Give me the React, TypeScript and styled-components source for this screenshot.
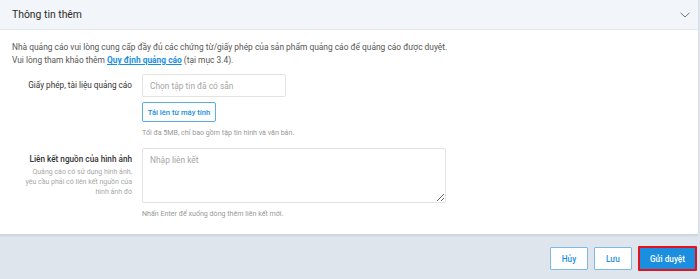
import styled, { createGlobalStyle } from "styled-components";

const GlobalStyle = createGlobalStyle`
  html, body {
    margin: 0;
    padding: 0;
    background: #dfe5ed;
    font-family: Roboto, "Liberation Sans", sans-serif;
  }
  * {
    box-sizing: border-box;
  }
`;

const Page = styled.div`
  width: 700px;
  height: 279px;
  display: flex;
  flex-direction: column;
  background: #dfe5ed;
  overflow: hidden;
`;

const Card = styled.section`
  width: 698px;
  background: #fff;
  border-bottom: 1px solid #cdd4dd;
  box-shadow: 0 1px 2px rgba(0, 0, 0, 0.08);
`;

const CardHeader = styled.div`
  height: 30px;
  padding: 0 8px 0 12px;
  display: flex;
  align-items: center;
  justify-content: space-between;
  background: #f2f5f9;
  border-bottom: 1px solid #e4e8ee;
  color: #2b2b2b;
  font-size: 10.4px;
  font-weight: 400;
`;

const CardBody = styled.div`
  padding: 11px 12px 0;
  height: 204px;
`;

const Intro = styled.p`
  margin: 0 0 7px;
  font-size: 8.4px;
  line-height: 13px;
  color: #555;
`;

const RuleLink = styled.a`
  color: #1a8fe0;
  font-weight: 700;
  text-decoration: underline;
`;

const FormRow = styled.div<{ $gap?: number }>`
  display: grid;
  grid-template-columns: 120px 1fr;
  column-gap: 10px;
  margin-bottom: ${(p) => p.$gap ?? 0}px;
`;

const LabelCol = styled.div<{ $top: number }>`
  text-align: right;
  padding-top: ${(p) => p.$top}px;
`;

const Label = styled.div<{ $bold?: boolean }>`
  font-size: 8.2px;
  color: #333;
  font-weight: ${(p) => (p.$bold ? 500 : 400)};
`;

const SubLabel = styled.div`
  margin-top: 3px;
  font-size: 7px;
  line-height: 10px;
  color: #a8a8a8;
`;

const Field = styled.div`
  display: flex;
  flex-direction: column;
  align-items: flex-start;
`;

const TextInput = styled.input`
  width: 144px;
  height: 23px;
  padding: 0 7px;
  border: 1px solid #e3e3e3;
  border-radius: 2px;
  font-family: inherit;
  font-size: 8.4px;
  color: #333;
  outline: none;
  &::placeholder {
    color: #a6a6a6;
  }
`;

const TextArea = styled.textarea`
  width: 304px;
  height: 55px;
  padding: 6px 7px;
  border: 1px solid #e3e3e3;
  border-radius: 2px;
  font-family: inherit;
  font-size: 8.4px;
  color: #333;
  outline: none;
  resize: vertical;
  &::placeholder {
    color: #a6a6a6;
  }
`;

const UploadButton = styled.button`
  margin-top: 5px;
  width: 74px;
  height: 20px;
  padding: 0;
  background: #fff;
  border: 1px solid #5aaee6;
  border-radius: 2px;
  color: #1a8fe0;
  font-family: inherit;
  font-size: 7.6px;
  font-weight: 500;
`;

const Hint = styled.div`
  margin-top: 6px;
  font-size: 7.1px;
  color: #999;
`;

const Footer = styled.div`
  flex: 1;
  display: flex;
  justify-content: flex-end;
  align-items: center;
  gap: 6px;
  padding: 3px 3px 0 0;
`;

const FooterButton = styled.button<{ $primary?: boolean }>`
  height: ${(p) => (p.$primary ? 25 : 23)}px;
  min-width: ${(p) => (p.$primary ? 59 : 38)}px;
  padding: 0 8px;
  border-radius: 1px;
  font-family: inherit;
  font-size: 8.2px;
  font-weight: 500;
  background: ${(p) => (p.$primary ? "#1a8fe0" : "#fff")};
  color: ${(p) => (p.$primary ? "#fff" : "#1a8fe0")};
  border: ${(p) => (p.$primary ? "2px solid #e8101a" : "1px solid #7cbbe9")};
`;

function Chevron() {
  return (
    <svg width="10" height="6" viewBox="0 0 10 6" fill="none">
      <path d="M0.5 0.8 L5 5 L9.5 0.8" stroke="#777" strokeWidth="1" />
    </svg>
  );
}

export default function App() {
  return (
    <>
      <GlobalStyle />
      <Page>
        <Card>
          <CardHeader>
            <span>Thông tin thêm</span>
            <Chevron />
          </CardHeader>
          <CardBody>
            <Intro>
              Nhà quảng cáo vui lòng cung cấp đầy đủ các chứng từ/giấy phép
              của sản phẩm quảng cáo để quảng cáo được duyệt.
              <br />
              Vui lòng tham khảo thêm <RuleLink>Quy định quảng cáo</RuleLink>{" "}
              (tại mục 3.4).
            </Intro>
            <FormRow $gap={11}>
              <LabelCol $top={6}>
                <Label>Giấy phép, tài liệu quảng cáo</Label>
              </LabelCol>
              <Field>
                <TextInput placeholder="Chọn tập tin đã có sẵn" />
                <UploadButton>Tải lên từ máy tính</UploadButton>
                <Hint>Tối đa 5MB, chỉ bao gồm tập tin hình và văn bản.</Hint>
              </Field>
            </FormRow>
            <FormRow>
              <LabelCol $top={6}>
                <Label $bold>Liên kết nguồn của hình ảnh</Label>
                <SubLabel>
                  Quảng cáo có sử dụng hình ảnh,
                  <br />
                  yêu cầu phải có liên kết nguồn của
                  <br />
                  hình ảnh đó
                </SubLabel>
              </LabelCol>
              <Field>
                <TextArea placeholder="Nhập liên kết" />
                <Hint>Nhấn Enter để xuống dòng thêm liên kết mới.</Hint>
              </Field>
            </FormRow>
          </CardBody>
        </Card>
        <Footer>
          <FooterButton>Hủy</FooterButton>
          <FooterButton>Lưu</FooterButton>
          <FooterButton $primary>Gửi duyệt</FooterButton>
        </Footer>
      </Page>
    </>
  );
}
